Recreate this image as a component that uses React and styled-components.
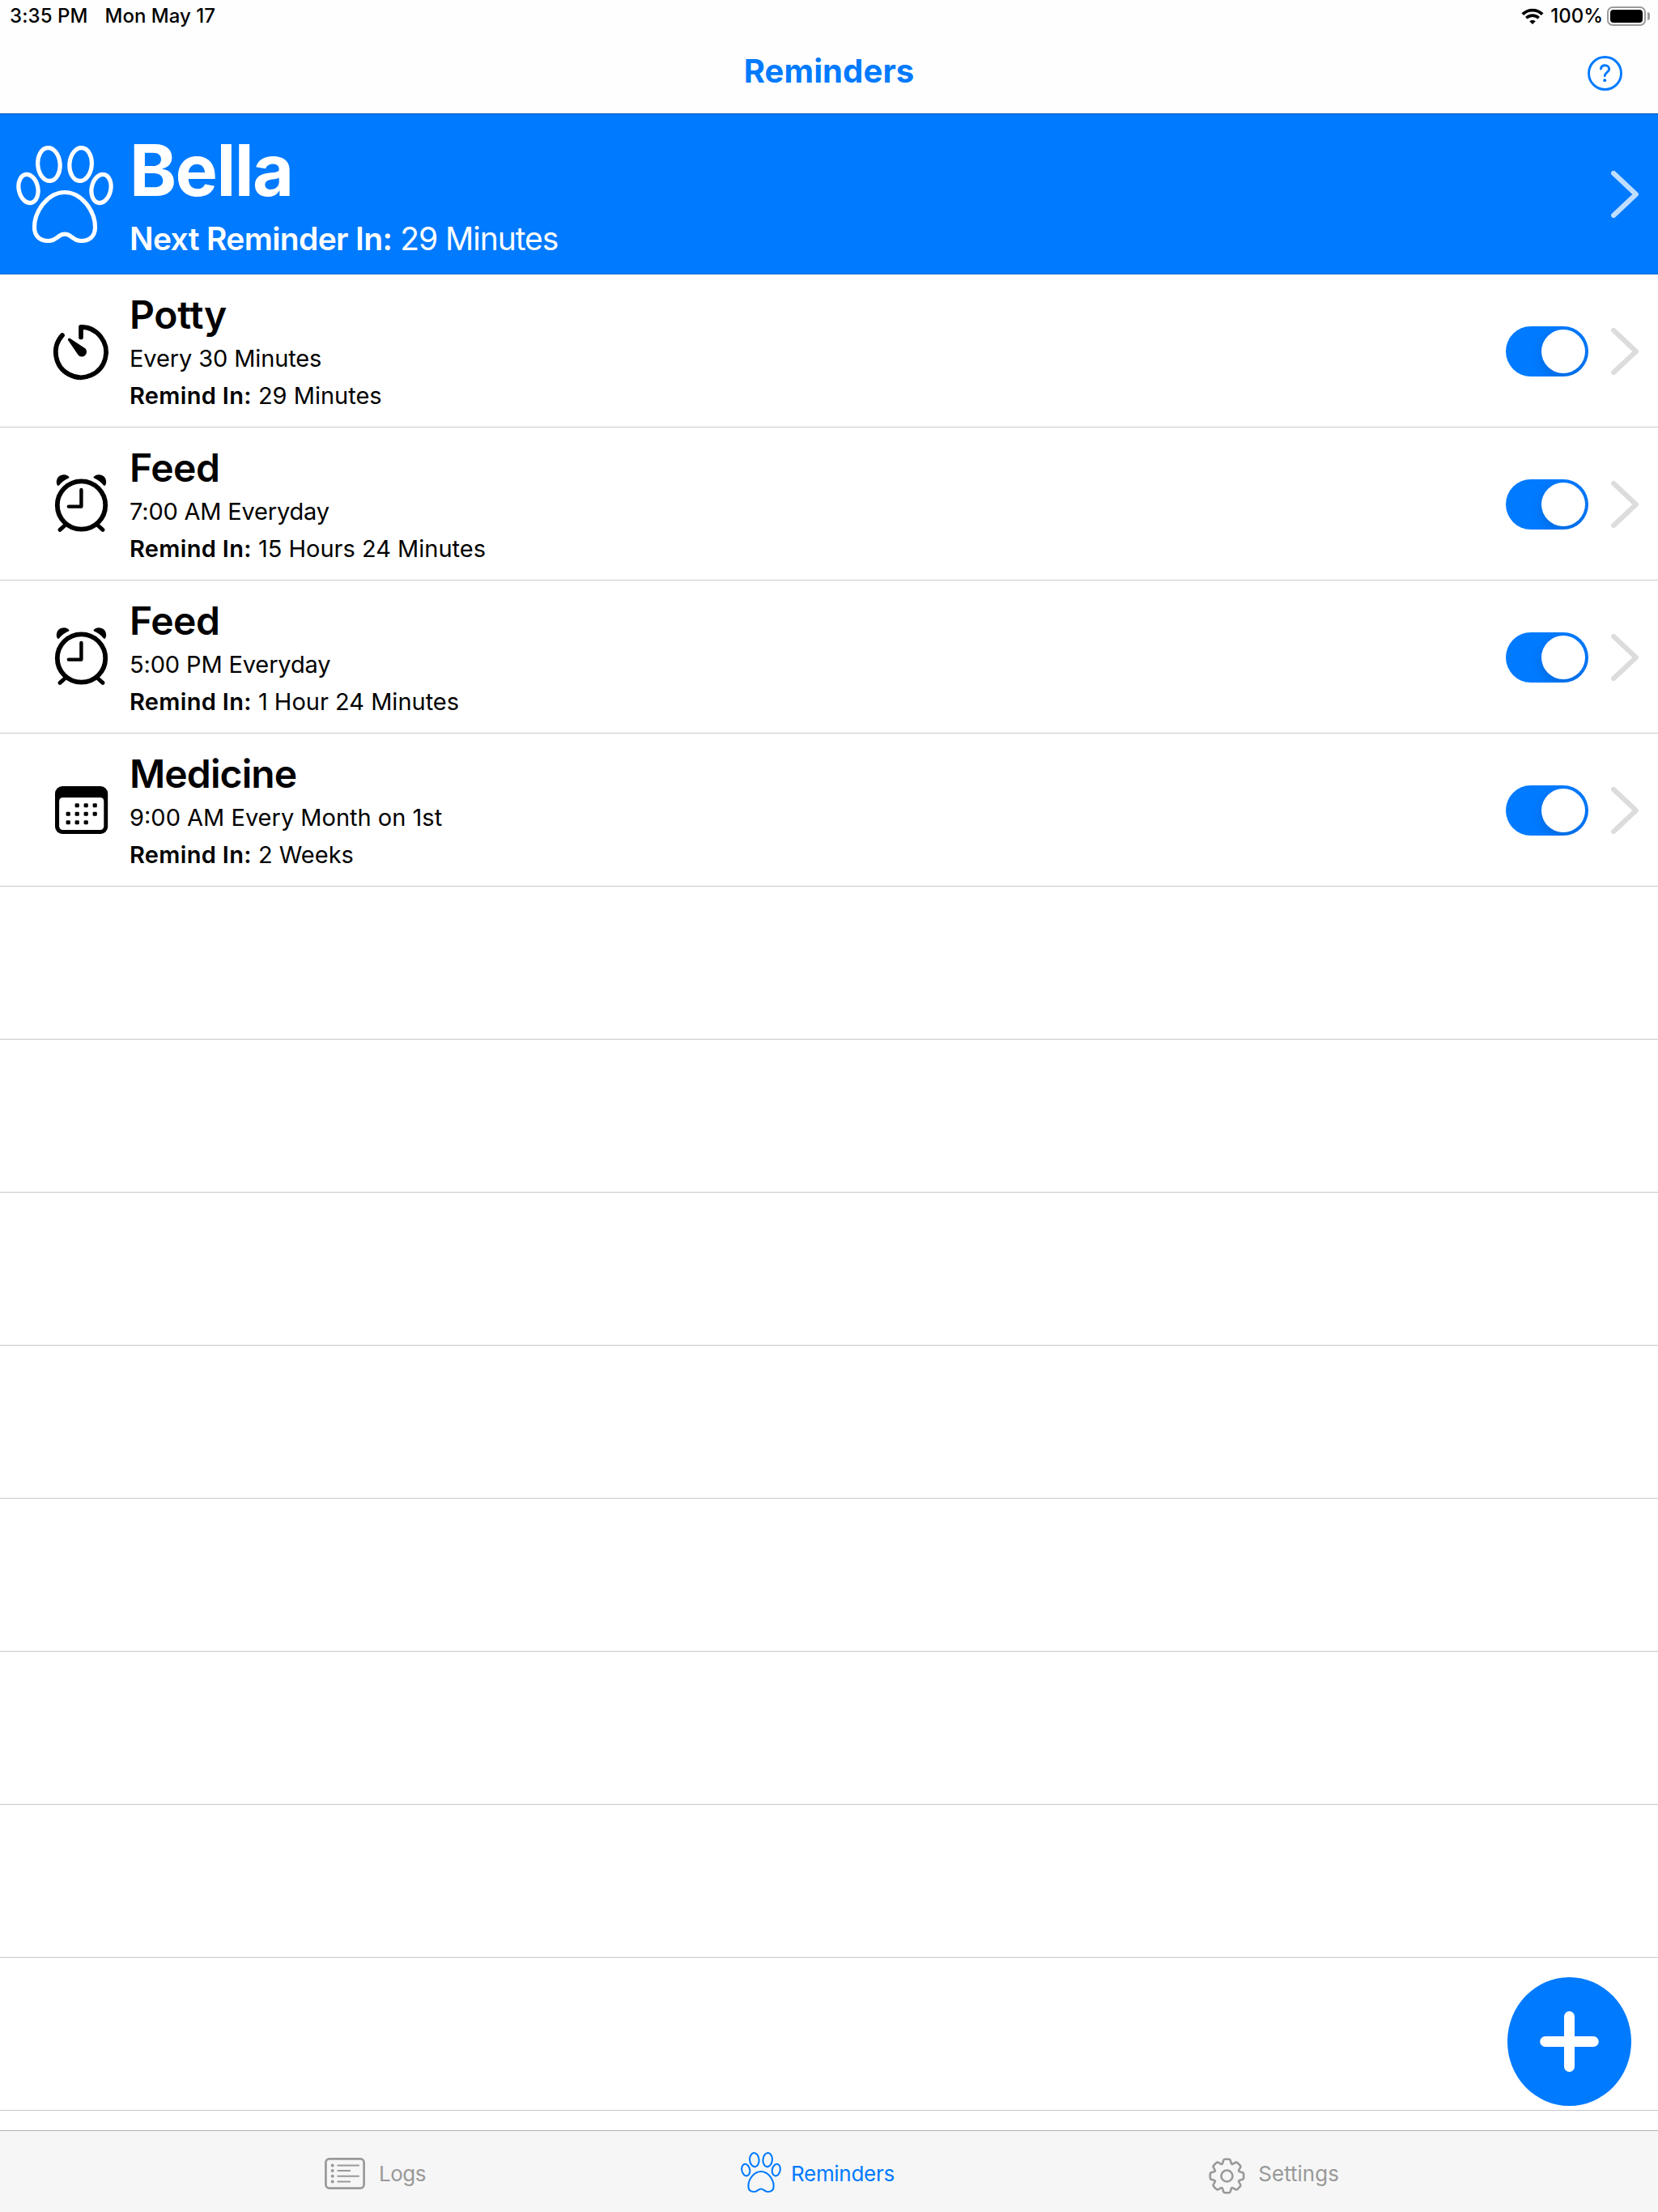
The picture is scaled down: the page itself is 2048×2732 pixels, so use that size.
import React from "react";
import styled, { createGlobalStyle } from "styled-components";

const BLUE = "#007aff";

const GlobalStyle = createGlobalStyle`
  * { box-sizing: border-box; }
  body { margin: 0; background: #fff; }
`;

const Screen = styled.div`
  width: 2048px;
  height: 2732px;
  position: relative;
  display: flex;
  flex-direction: column;
  overflow: hidden;
  background: #fff;
  color: #000;
  font-family: Inter, "Liberation Sans", sans-serif;
  white-space: nowrap;
`;

const StatusBar = styled.div`
  height: 38px;
  display: flex;
  justify-content: space-between;
  padding: 0 10px 0 12px;
  background: #fefefe;
  font-size: 24px;
  font-weight: 500;
  line-height: 39px;
`;
const StatusGroup = styled.div`
  display: flex;
  gap: ${(p) => p.$gap || 0}px;
`;
const StatusText = styled.span`
  letter-spacing: ${(p) => p.$track || 0}px;
`;
const WifiIcon = styled.svg`
  width: 28px;
  height: 21px;
  margin: 10px 8px 0 0;
`;
const Battery = styled.div`
  width: 48px;
  height: 24px;
  margin: 8px 2px 0 5px;
  padding: 2px;
  border: 2px solid #9b9b9b;
  border-radius: 7px;
`;
const BatteryLevel = styled.div`
  height: 16px;
  border-radius: 4px;
  background: #000;
`;
const BatteryCap = styled.div`
  width: 3px;
  height: 10px;
  margin-top: 15px;
  border-radius: 0 3px 3px 0;
  background: #9b9b9b;
`;

const NavBar = styled.header`
  height: 103px;
  display: grid;
  grid-template-columns: 1fr auto 1fr;
  background: #fefefe;
  border-bottom: 1px solid #0057b5;
`;
const NavTitle = styled.h1`
  grid-column: 2;
  margin: 0;
  color: ${BLUE};
  font-size: 40px;
  font-weight: 700;
  line-height: 99px;
  letter-spacing: 0.12px;
`;
const HelpButton = styled.svg`
  width: 43px;
  height: 43px;
  margin: 31px 44px 0 0;
  justify-self: end;
`;

const Hero = styled.section`
  height: 198px;
  display: flex;
  background: ${BLUE};
  border-bottom: 1px solid #0a6ad2;
  color: #fff;
`;
const HeroPaw = styled.div`
  width: 160px;
  padding: 39px 0 0 20px;
`;
const HeroText = styled.div`
  flex: 1;
  padding-top: 14px;
`;
const HeroName = styled.div`
  font-size: 88px;
  font-weight: 700;
  line-height: 110px;
  letter-spacing: -1.6px;
`;
const HeroNext = styled.div`
  font-size: 39px;
  line-height: 60px;
  letter-spacing: -1.02px;
`;
const Strong = styled.span`
  font-weight: 600;
  letter-spacing: ${(p) => p.$track}px;
`;
const Chevron = styled.svg`
  width: 34px;
  height: 60px;
  align-self: center;
  margin: 1px 24px 0 0;
`;

const Row = styled.div`
  height: 189px;
  flex: none;
  display: flex;
  border-bottom: 1px solid #c8c8c8;
`;
const RowIcon = styled.div`
  width: 160px;
  padding: 60px 0 0 64px;
  svg { display: block; overflow: visible; }
`;
const RowText = styled.div`
  flex: 1;
  padding-top: 18px;
`;
const RowTitle = styled.div`
  font-size: 48px;
  font-weight: 600;
  line-height: 64px;
  letter-spacing: ${(p) => p.$track}px;
`;
const RowLine = styled.div`
  font-size: 29px;
  line-height: ${(p) => p.$lh}px;
  letter-spacing: ${(p) => p.$track || 0}px;
`;
const Toggle = styled.div`
  width: 102px;
  height: 62px;
  display: flex;
  justify-content: flex-end;
  align-self: center;
  margin: 2px 28px 0 0;
  padding: 4px;
  border-radius: 31px;
  background: ${BLUE};
  overflow: hidden;
`;
const Knob = styled.div`
  width: 54px;
  height: 54px;
  border-radius: 50%;
  background: #fff;
  box-shadow: 0 5px 14px rgba(0, 0, 0, 0.14);
`;

const List = styled.main`
  height: 2292px;
  overflow: hidden;
`;

const TabBar = styled.nav`
  height: 101px;
  display: flex;
  background: #f6f6f6;
  border-top: 1px solid #b2b2b2;
`;
const Tab = styled.div`
  display: flex;
  margin-left: ${(p) => p.$left}px;
  color: ${(p) => (p.$active ? BLUE : "#999")};
  font-size: 26px;
  line-height: 106px;
  svg { margin-top: ${(p) => p.$iconTop}px; margin-right: ${(p) => p.$gap}px; flex: none; }
`;
const TabLabel = styled.span`
  letter-spacing: ${(p) => p.$track || 0}px;
`;

const AddButton = styled.button`
  position: absolute;
  left: 1862px;
  top: 2442px;
  width: 153px;
  height: 159px;
  padding: 0;
  border: 0;
  border-radius: 50%;
  background: ${BLUE};
`;

function Paw({ size, stroke = 5.2 }) {
  return (
    <svg width={size} height={size} viewBox="0 0 120 120" fill="none" stroke="currentColor" strokeWidth={stroke}>
      <ellipse cx="40.4" cy="23" rx="13.7" ry="20.5" transform="rotate(-5 40.4 23)" />
      <ellipse cx="79.6" cy="23" rx="13.7" ry="20.5" transform="rotate(5 79.6 23)" />
      <ellipse cx="15" cy="53" rx="11.8" ry="17.8" transform="rotate(-12 15 53)" />
      <ellipse cx="105" cy="53" rx="11.8" ry="17.8" transform="rotate(12 105 53)" />
      <path d="M60 57.5C81 57.5 97.5 81 97.5 100.5C97.5 111.5 91 117.5 80 117.5C70 117.5 68.5 109.2 60 109.2C51.5 109.2 50 117.5 40 117.5C29 117.5 22.5 111.5 22.5 100.5C22.5 81 39 57.5 60 57.5Z" />
    </svg>
  );
}

function TimerIcon() {
  return (
    <svg width="72" height="72" viewBox="0 0 72 72" fill="none" stroke="#000" strokeWidth="5.7" strokeLinecap="round" strokeLinejoin="round">
      <path d="M36 17.5V4.9A31.1 31.1 0 1 1 13 15" />
      <path d="M20.4 19.2C19.7 19.9 19.8 20.7 20.3 21.4L32.6 39.5A5.8 5.8 0 1 0 41.5 31.6L22.6 19C21.8 18.5 21 18.5 20.4 19.2Z" fill="#000" stroke="none" />
    </svg>
  );
}

function AlarmIcon() {
  return (
    <svg width="72" height="76" viewBox="0 0 72 76" fill="none" stroke="#000" strokeWidth="5.8" strokeLinecap="round" strokeLinejoin="round">
      <circle cx="36.5" cy="36" r="29.7" />
      <path d="M36.4 17V37.6H20.8" strokeWidth="4.4" />
      <path d="M16 61L10 66.4M57 61L63 66.4" strokeWidth="5" />
      <path d="M7 11.6C4 7 6.600 -1.6 14.600 -1.8C18 -1.9 20.600 -0.4 21.400 1.2C21.600 1.8 21.400 2.3 20.800 2.6C16.100 4.7 12.100 7.7 8.900 11.6C8.300 12.2 7.500 12.2 7 11.6Z" fill="#000" stroke="none" />
      <path d="M66 11.6C69 7 66.400 -1.6 58.400 -1.8C55 -1.9 52.400 -0.4 51.600 1.2C51.400 1.8 51.600 2.3 52.200 2.6C56.900 4.7 60.900 7.7 64.100 11.6C64.700 12.2 65.500 12.2 66 11.6Z" fill="#000" stroke="none" />
    </svg>
  );
}

const CALENDAR_DOTS = [[1, 0], [2, 0], [3, 0], [0, 1], [1, 1], [2, 1], [3, 1], [0, 2], [1, 2], [2, 2]];

function CalendarIcon() {
  return (
    <svg width="72" height="72" viewBox="0 0 72 72">
      <rect x="4" y="5" width="65.2" height="59" rx="9" />
      <rect x="9.1" y="19" width="55.2" height="40" rx="4.5" fill="#fff" />
      {CALENDAR_DOTS.map(([c, r]) => (
        <rect key={`${c}${r}`} x={17.6 + c * 11} y={26.3 + r * 10.5} width="5.2" height="5" rx="1.2" />
      ))}
    </svg>
  );
}

function LogsIcon() {
  return (
    <svg width="50" height="39" viewBox="0 0 50 39" fill="none" stroke="currentColor" strokeLinecap="round">
      <rect x="1.4" y="1.4" width="47.2" height="36.2" rx="4.5" strokeWidth="2.7" />
      {[9.4, 16.1, 22.7, 29.5].map((y, i) => (
        <g key={y}>
          <circle cx="9.7" cy={y} r="2" fill="currentColor" stroke="none" />
          <path d={`M16.3 ${y}H${i % 2 ? 31.2 : 42}`} strokeWidth="2" />
        </g>
      ))}
    </svg>
  );
}

/* Eight-toothed cog outline with softened corners. */
const gearPath = (() => {
  const pts = [];
  for (let k = 0; k < 8; k++) {
    [[-20, 15.8], [-11, 21.1], [11, 21.1], [20, 15.8]].forEach(([a, r]) => {
      const t = ((k * 45 + a - 90) * Math.PI) / 180;
      pts.push([22.5 + r * Math.cos(t), 22.5 + r * Math.sin(t)]);
    });
  }
  const toward = (a, b, d) => {
    const l = Math.hypot(b[0] - a[0], b[1] - a[1]);
    const f = Math.min(d / l, 0.5);
    return [a[0] + (b[0] - a[0]) * f, a[1] + (b[1] - a[1]) * f].map((n) => n.toFixed(2));
  };
  return (
    pts
      .map((p, i) => {
        const prev = pts[(i + pts.length - 1) % pts.length];
        const next = pts[(i + 1) % pts.length];
        return `${i ? "L" : "M"}${toward(p, prev, 2)}Q${p.map((n) => n.toFixed(2))} ${toward(p, next, 2)}`;
      })
      .join("") + "Z"
  );
})();

function GearIcon() {
  return (
    <svg width="45" height="45" viewBox="0 0 45 45" fill="none" stroke="currentColor" strokeWidth="2.6">
      <path d={gearPath} strokeLinejoin="round" />
      <circle cx="22.5" cy="22.5" r="7" />
    </svg>
  );
}

function ChevronIcon({ color }) {
  return (
    <Chevron viewBox="0 0 34 60" fill="none" stroke={color} strokeWidth="6.2" strokeLinecap="round" strokeLinejoin="round">
      <path d="M3.2 4L30.8 30L3.2 56" />
    </Chevron>
  );
}

const REMINDERS = [
  { Icon: TimerIcon, title: "Potty", track: -0.3, when: "Every 30 Minutes", whenTrack: -0.12, next: "29 Minutes" },
  { Icon: AlarmIcon, title: "Feed", track: -0.5, when: "7:00 AM Everyday", whenTrack: -0.2, next: "15 Hours 24 Minutes" },
  { Icon: AlarmIcon, title: "Feed", track: -0.5, when: "5:00 PM Everyday", whenTrack: -0.14, next: "1 Hour 24 Minutes" },
  { Icon: CalendarIcon, title: "Medicine", track: -0.9, when: "9:00 AM Every Month on 1st", whenTrack: 0, next: "2 Weeks" },
];

export default function App() {
  return (
    <>
      <GlobalStyle />
      <Screen>
        <StatusBar>
          <StatusGroup $gap={21}>
            <StatusText $track={0.1}>3:35 PM</StatusText>
            <StatusText>Mon May 17</StatusText>
          </StatusGroup>
          <StatusGroup>
            <WifiIcon viewBox="0 0 28 21">
              <path d="M1.8 7.6A17.3 17.3 0 0 1 26.2 7.6" fill="none" stroke="#000" strokeWidth="3.8" />
              <path d="M6.3 12.3A11 11 0 0 1 21.7 12.3" fill="none" stroke="#000" strokeWidth="3.6" />
              <path d="M14 20L10.2 16.2A5.5 5.5 0 0 1 17.8 16.2Z" />
            </WifiIcon>
            <StatusText>100%</StatusText>
            <Battery><BatteryLevel /></Battery>
            <BatteryCap />
          </StatusGroup>
        </StatusBar>
        <NavBar>
          <NavTitle>Reminders</NavTitle>
          <HelpButton viewBox="0 0 43 43" fill="none" stroke={BLUE} strokeLinecap="round" strokeLinejoin="round">
            <circle cx="21.5" cy="21.5" r="20" strokeWidth="2.9" />
            <path d="M16.5 16C16.7 13.3 18.6 11.8 21.5 11.8C24.5 11.8 26.7 13.6 26.7 16.3C26.7 20.2 21.2 20.6 21.2 24.8" strokeWidth="2.9" />
            <circle cx="21.2" cy="30.2" r="2" fill={BLUE} stroke="none" />
          </HelpButton>
        </NavBar>
        <Hero>
          <HeroPaw><Paw size={120} /></HeroPaw>
          <HeroText>
            <HeroName>Bella</HeroName>
            <HeroNext><Strong $track={-0.65}>Next Reminder In:</Strong> 29 Minutes</HeroNext>
          </HeroText>
          <ChevronIcon color="#bfdeff" />
        </Hero>
        <List>
          {REMINDERS.map(({ Icon, title, track, when, whenTrack, next }, i) => (
            <Row key={i}>
              <RowIcon><Icon /></RowIcon>
              <RowText>
                <RowTitle $track={track}>{title}</RowTitle>
                <RowLine $lh={44} $track={whenTrack}>{when}</RowLine>
                <RowLine $lh={48}><Strong $track={0.32}>Remind In:</Strong> {next}</RowLine>
              </RowText>
              <Toggle><Knob /></Toggle>
              <ChevronIcon color="#dcdcdc" />
            </Row>
          ))}
          {Array.from({ length: 8 }, (_, i) => <Row key={i} />)}
        </List>
        <TabBar>
          <Tab $left={401} $iconTop={33} $gap={17}><LogsIcon /><TabLabel $track={-0.5}>Logs</TabLabel></Tab>
          <Tab $left={389} $iconTop={26} $gap={12} $active><Paw size={50} stroke={5} /><TabLabel $track={-0.3}>Reminders</TabLabel></Tab>
          <Tab $left={388} $iconTop={33} $gap={16.5}><GearIcon /><TabLabel>Settings</TabLabel></Tab>
        </TabBar>
        <AddButton aria-label="Add reminder">
          <svg width="153" height="159" viewBox="0 0 153 159" stroke="#fff" strokeWidth="13" strokeLinecap="round">
            <path d="M46.7 79.5H106.3M76.5 48.5V110.5" />
          </svg>
        </AddButton>
      </Screen>
    </>
  );
}
